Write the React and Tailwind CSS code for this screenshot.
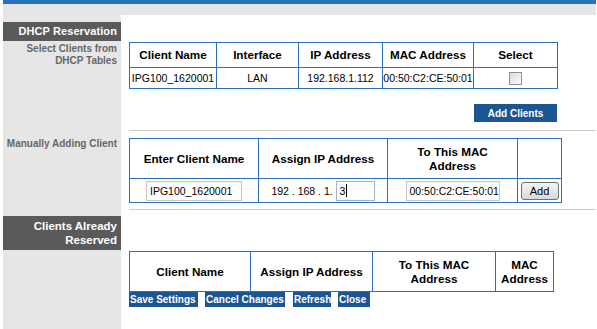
import React from "react";

const B = "border border-[#2a71b8]";

function Th({ children, className = "" }) {
  return (
    <th className={`${B} p-0 text-center align-middle text-[11.7px] font-bold leading-[14px] text-black ${className}`}>
      {children}
    </th>
  );
}

function Td({ children, className = "" }) {
  return (
    <td className={`${B} p-0 text-center align-middle text-[10.5px] leading-[12px] text-black ${className}`}>
      {children}
    </td>
  );
}

function Checkbox() {
  return (
    <span className="inline-block h-[13px] w-[13px] border border-[#8e8e8e] bg-gradient-to-br from-[#dcdcdc] to-[#fbfbfb] align-middle" />
  );
}

function TextInput({ value, className = "" }) {
  return (
    <div
      className={`inline-flex h-[20px] items-center overflow-hidden whitespace-nowrap border border-[#c8c8c8] bg-white pl-[3px] text-left align-middle text-[10.5px] text-black shadow-[inset_0_1px_1px_rgba(0,0,0,0.06)] ${className}`}
    >
      {value}
    </div>
  );
}

function BlueBtn({ children, className = "" }) {
  return (
    <span
      className={`inline-flex h-[15px] items-center overflow-hidden whitespace-nowrap bg-[#1b5592] pl-[1px] text-[10px] font-bold leading-none text-white ${className}`}
    >
      {children}
    </span>
  );
}

export default function App() {
  return (
    <div className="ml-[3px] w-[593px] font-['Liberation_Sans',Arial,sans-serif]">
      <div className="h-[4px] bg-[#2a71b8]" />
      <div className="flex min-h-[325px] bg-[#e6e6e6]">
        {/* sidebar */}
        <aside className="w-[118px] shrink-0">
          <div className="mt-[18px] flex h-[19px] items-center justify-end bg-[#5a5a5a] pr-[4px] text-[11px] font-bold tracking-[0.1px] text-white">
            DHCP Reservation
          </div>
          <div className="mt-[2px] pr-[4px] text-right text-[10px] font-bold leading-[12px] text-[#666666]">
            Select Clients from
            <br />
            DHCP Tables
          </div>
          <div className="mt-[71px] pr-[4px] text-right text-[10px] font-bold leading-[12px] text-[#666666]">
            Manually Adding Client
          </div>
          <div className="mt-[66px] flex h-[34px] flex-col items-end justify-center bg-[#5a5a5a] pr-[4px] text-right text-[11.5px] font-bold leading-[14px] text-white">
            <span>Clients Already</span>
            <span>Reserved</span>
          </div>
        </aside>

        {/* main */}
        <main className="mt-[11px] flex-1 bg-white pl-[8px]">
          {/* table 1 */}
          <table className="mt-[27px] w-[428px] table-fixed border-collapse">
            <colgroup>
              <col className="w-[87px]" />
              <col className="w-[82px]" />
              <col className="w-[84px]" />
              <col className="w-[91px]" />
              <col className="w-[84px]" />
            </colgroup>
            <thead>
              <tr className="h-[25px]">
                <Th>Client Name</Th>
                <Th>Interface</Th>
                <Th>IP Address</Th>
                <Th>MAC Address</Th>
                <Th>Select</Th>
              </tr>
            </thead>
            <tbody>
              <tr className="h-[21px]">
                <Td className="whitespace-nowrap">IPG100_1620001</Td>
                <Td>LAN</Td>
                <Td>192.168.1.112</Td>
                <Td className="whitespace-nowrap">00:50:C2:CE:50:01</Td>
                <Td>
                  <Checkbox />
                </Td>
              </tr>
            </tbody>
          </table>

          <div className="mt-[15px] flex w-[428px] justify-end">
            <span className="flex h-[18px] w-[83px] items-center justify-center bg-[#1b5592] text-[10px] font-bold text-white">
              Add Clients
            </span>
          </div>

          <div className="mt-[8px] h-px bg-[#cccccc]" />

          {/* table 2 */}
          <table className="mt-[7px] w-[432px] table-fixed border-collapse">
            <colgroup>
              <col className="w-[129px]" />
              <col className="w-[129px]" />
              <col className="w-[130px]" />
              <col className="w-[44px]" />
            </colgroup>
            <thead>
              <tr className="h-[40px]">
                <Th>Enter Client Name</Th>
                <Th>Assign IP Address</Th>
                <Th>
                  To This MAC
                  <br />
                  Address
                </Th>
                <Th></Th>
              </tr>
            </thead>
            <tbody>
              <tr className="h-[24px]">
                <Td>
                  <TextInput value="IPG100_1620001" className="w-[96px]" />
                </Td>
                <Td className="whitespace-nowrap">
                  <span className="align-middle">192 . 168 . 1. </span>
                  <span className="inline-flex h-[20px] w-[39px] items-center border border-[#9fb6cf] bg-white pl-[3px] text-left align-middle text-[10.5px]">
                    3<span className="ml-[1px] inline-block h-[13px] w-px bg-black" />
                  </span>
                </Td>
                <Td>
                  <TextInput value="00:50:C2:CE:50:01" className="w-[94px]" />
                </Td>
                <Td>
                  <span className="inline-flex h-[18px] w-[38px] items-center justify-center rounded-[3px] border border-[#707070] bg-gradient-to-b from-[#f4f4f4] to-[#dadada] align-middle text-[11px] text-black">
                    Add
                  </span>
                </Td>
              </tr>
            </tbody>
          </table>

          <div className="mt-[6px] h-px bg-[#cccccc]" />

          {/* table 3 */}
          <table className="mt-[41px] w-[424px] table-fixed border-collapse">
            <colgroup>
              <col className="w-[121px]" />
              <col className="w-[122px]" />
              <col className="w-[123px]" />
              <col className="w-[58px]" />
            </colgroup>
            <thead>
              <tr className="h-[40px]">
                <Th>Client Name</Th>
                <Th>Assign IP Address</Th>
                <Th>
                  To This MAC
                  <br />
                  Address
                </Th>
                <Th>
                  MAC
                  <br />
                  Address
                </Th>
              </tr>
            </thead>
          </table>

          <div className="flex">
            <BlueBtn className="w-[69px]">Save Settings</BlueBtn>
            <BlueBtn className="ml-[7px] w-[80px]">Cancel Changes</BlueBtn>
            <BlueBtn className="ml-[8px] w-[38px]">Refresh</BlueBtn>
            <BlueBtn className="ml-[7px] w-[32px]">Close</BlueBtn>
          </div>
        </main>
      </div>
    </div>
  );
}
